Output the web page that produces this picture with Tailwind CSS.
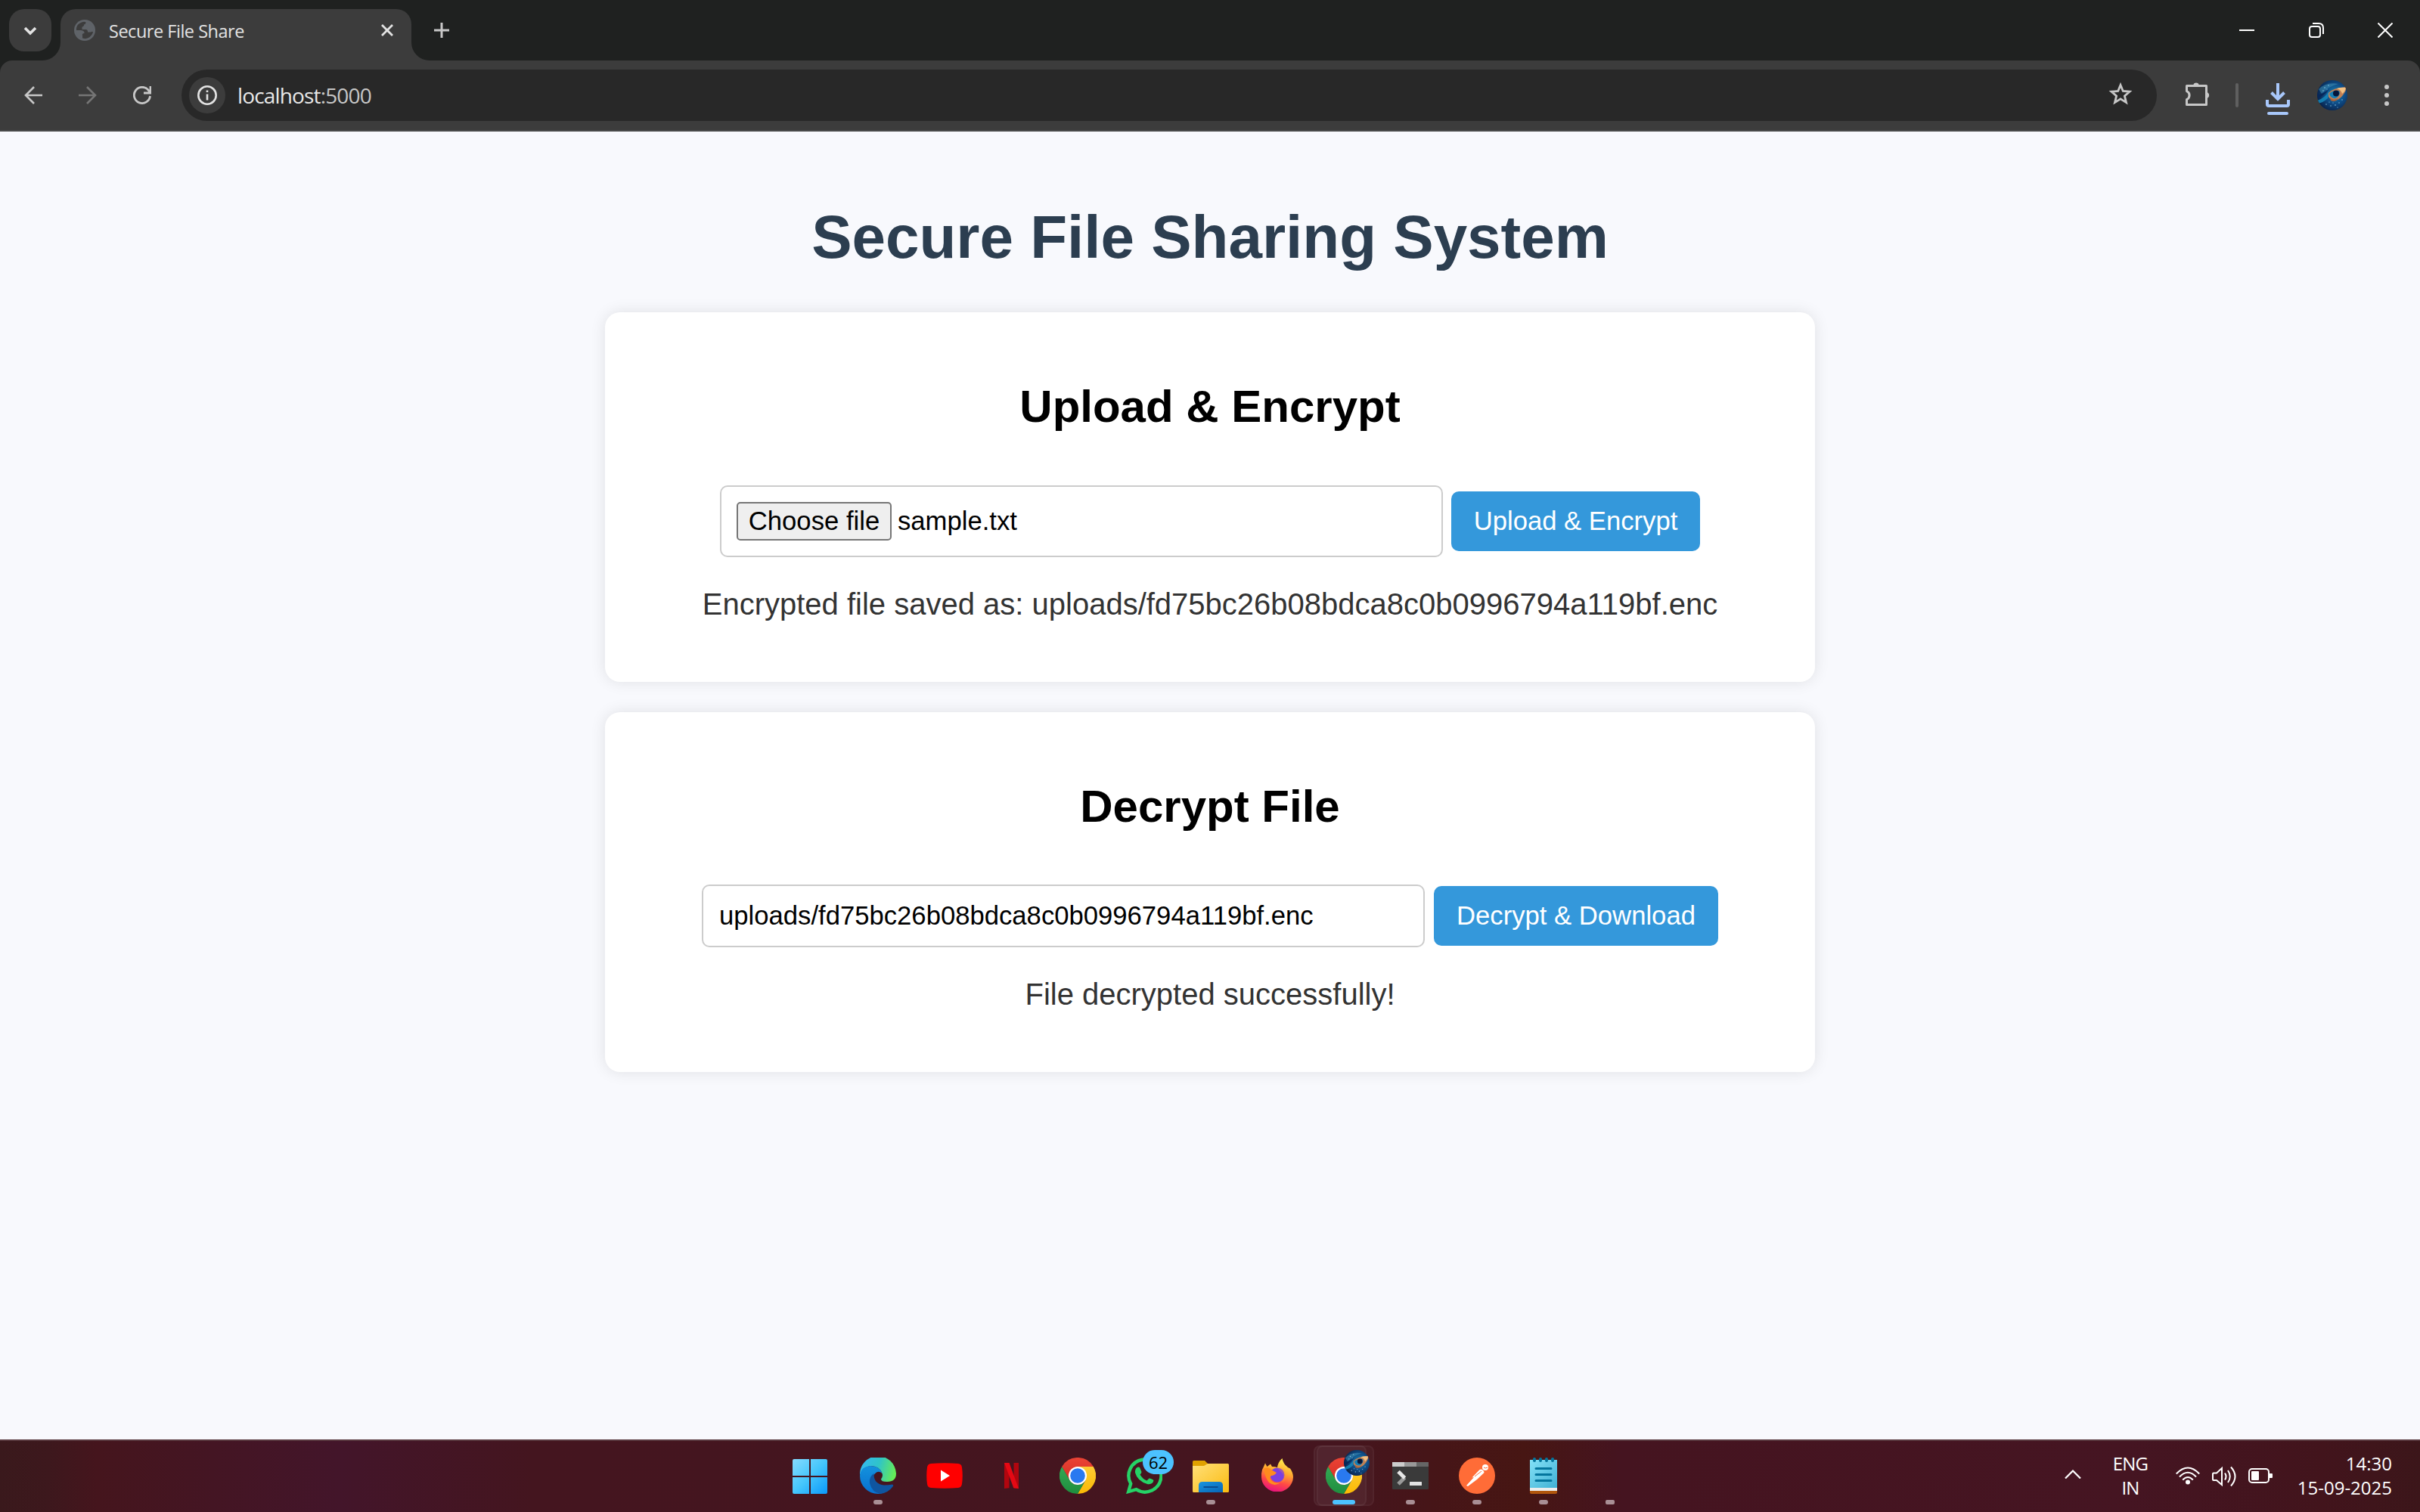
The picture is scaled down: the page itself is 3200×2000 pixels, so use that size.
<!DOCTYPE html>
<html lang="en">
<head>
<meta charset="utf-8">
<title>Secure File Share</title>
<script src="https://cdn.jsdelivr.net/npm/@tailwindcss/browser@4"></script>
</head>
<body class="w-[3200px] h-[2000px] overflow-hidden flex flex-col bg-[#f8f9fd] font-['Liberation_Sans',Arial,sans-serif]">

<!-- shared artwork -->
<svg class="absolute w-0 h-0" aria-hidden="true">
  <defs>
    <radialGradient id="eyeBg" cx=".6" cy=".45" r=".65"><stop offset="0" stop-color="#1787b8"/><stop offset=".5" stop-color="#0f4c86"/><stop offset="1" stop-color="#071c42"/></radialGradient>
    <clipPath id="eyeClip"><circle cx="20" cy="20" r="20"/></clipPath>
    <symbol id="eye" viewBox="0 0 40 40">
      <g clip-path="url(#eyeClip)">
        <rect width="40" height="40" fill="url(#eyeBg)"/>
        <path d="M2 12Q12 2 28 5Q15 8 6 18Z" fill="#3f8fb5" opacity=".55"/>
        <path d="M0 27Q10 24 16 14L14 24Q8 30 0 31Z" fill="#178fc0" opacity=".8"/>
        <path d="M0 19Q8 19 16 12Q10 20 1 24Z" fill="#06275a"/>
        <path d="M15 17Q21 10 38 9Q39 13 36 17Q32 24 25 27Q18 27 15 22Z" fill="#c08055"/>
        <path d="M26 11Q32 9 38 10Q37 15 33 18Q32 13 26 11Z" fill="#f0c083"/>
        <path d="M16 18Q21 13 29 14Q32 19 25 24Q18 25 16 18Z" fill="#167fb5"/>
        <circle cx="25" cy="17.500" r="4" fill="#04163a"/>
        <path d="M17 23Q21 28 28 24Q24 30 18 27Z" fill="#a5623c"/>
        <g fill="#8fc9e6"><circle cx="10" cy="10" r=".8"/><circle cx="15" cy="7" r=".7"/><circle cx="8" cy="14" r=".7"/><circle cx="13" cy="12" r=".6"/><circle cx="12" cy="32" r=".7"/><circle cx="18" cy="34" r=".7"/><circle cx="24" cy="33" r=".8"/><circle cx="29" cy="30" r=".7"/><circle cx="33" cy="26" r=".7"/><circle cx="21" cy="30" r=".6"/><circle cx="27" cy="36" r=".6"/><circle cx="16" cy="29" r=".6"/></g>
      </g>
    </symbol>
    <linearGradient id="cr" x1="0" y1="0" x2="0" y2="1"><stop offset="0" stop-color="#ea4335"/><stop offset="1" stop-color="#d93025"/></linearGradient>
    <linearGradient id="cg" x1="0" y1="0" x2="0" y2="1"><stop offset="0" stop-color="#34a853"/><stop offset="1" stop-color="#1e8e3e"/></linearGradient>
    <linearGradient id="cy" x1="0" y1="0" x2="0" y2="1"><stop offset="0" stop-color="#fccc34"/><stop offset="1" stop-color="#fbb904"/></linearGradient>
    <symbol id="chrome" viewBox="0 0 48 48">
      <path d="M3.200 12A24 24 0 0 1 44.800 12H24L13.600 30Z" fill="url(#cr)"/>
      <path d="M44.800 12A24 24 0 0 1 24 48L34.400 30L24 12Z" fill="url(#cy)"/>
      <path d="M24 48A24 24 0 0 1 3.200 12L13.600 30A12 12 0 0 0 34.400 30Z" fill="url(#cg)"/>
      <circle cx="24" cy="24" r="12" fill="#fff"/><circle cx="24" cy="24" r="9.800" fill="#2979f0"/>
    </symbol>
  </defs>
</svg>

<!-- tab strip -->
<header class="h-20 shrink-0 bg-[#1f2120] flex items-start">
  <button class="ml-3 mt-3 size-14 rounded-[20px] bg-[#3c3c3c] flex items-center justify-center">
    <svg class="w-5 h-4 mt-px" viewBox="0 0 20 16" fill="none" stroke="#e3e3e3" stroke-width="3.600"><path d="M3 4L10 11L17 4"/></svg>
  </button>
  <div class="ml-3 mt-3 w-[464px] h-[68px] rounded-t-[20px] bg-[#3c3c3c] flex items-center relative">
    <svg class="absolute -left-6 bottom-0 size-6" viewBox="0 0 24 24"><path d="M24 0V24H0A24 24 0 0 0 24 0Z" fill="#3c3c3c"/></svg>
    <svg class="absolute -right-6 bottom-0 size-6" viewBox="0 0 24 24"><path d="M0 0V24H24A24 24 0 0 1 0 0Z" fill="#3c3c3c"/></svg>
    <svg class="ml-[18px] mb-3 size-7" viewBox="0 0 28 28"><circle cx="14" cy="14" r="14" fill="#5f6368"/><path d="M3 14Q2.500 7 8 4.500Q12 2 15.500 3.200Q16 5.500 13 6.500Q13.500 9 10.500 9.500V13H16Q18.500 14 18 16.500H22Q24.500 15 25 17Q22 24 15 25.200L11 24.500V20.500Q8 19.500 8 16.500L3.200 14Z" fill="#3c3c3c"/><path d="M2.600 14H9Q14 14.500 13.500 18Q10.500 18 10.800 20.500V25Q3 22 2.600 14ZM15.500 3.200Q24.500 5 25.400 14Q21 15 19 14Q18 11 15 11H12.500V8.500Q16.500 7 15.500 3.200Z" fill="#5f6368"/></svg>
    <span class="ml-[18px] mb-2.5 text-[23.500px] leading-8 tracking-[-0.480px] text-[#e3e3e3] font-['Open_Sans',sans-serif] whitespace-nowrap">Secure File Share</span>
    <svg class="absolute left-[424px] top-5 size-4" viewBox="0 0 16 16" stroke="#e3e3e3" stroke-width="2.800"><path d="M1 1L15 15M15 1L1 15"/></svg>
  </div>
  <svg class="ml-[30px] mt-[30px] size-5" viewBox="0 0 20 20" stroke="#c7c7c7" stroke-width="3"><path d="M10 0V20M0 10H20"/></svg>
  <div class="ml-auto mt-[30px] mr-9 flex items-center gap-[71.500px]">
    <svg class="size-5" viewBox="0 0 20 20" stroke="#fff" stroke-width="2"><path d="M0 10H20"/></svg>
    <svg class="size-5" viewBox="0 0 20 20" fill="none" stroke="#fff" stroke-width="2"><rect x="1" y="5" width="14" height="14" rx="3"/><path d="M5 1H13Q19 1 19 7V15"/></svg>
    <svg class="size-5" viewBox="0 0 20 20" stroke="#fff" stroke-width="2"><path d="M.5 .5L19.500 19.500M19.500 .5L.5 19.500"/></svg>
  </div>
</header>

<!-- toolbar -->
<nav class="h-[94px] shrink-0 bg-[#1f2120]">
  <div class="h-full rounded-t-[16px] bg-[#3c3c3c] border-b-2 border-[#4a4b4b] flex items-center pl-8">
    <svg class="size-6 mr-12" viewBox="0 0 24 24" fill="none" stroke="#c7c7c7" stroke-width="2.600"><path d="M24 12H2M13 1L2 12L13 23"/></svg>
    <svg class="size-6 mr-12" viewBox="0 0 24 24" fill="none" stroke="#757575" stroke-width="2.600"><path d="M0 12H22M11 1L22 12L11 23"/></svg>
    <svg class="size-6 mr-10" viewBox="0 0 24 24" fill="none" stroke="#c7c7c7" stroke-width="2.800"><path d="M22.500 13A10.600 10.600 0 1 1 20 5L22 8M23 0V9H14"/></svg>
    <div class="w-[2612px] h-[68px] rounded-full bg-[#282828] flex items-center pl-2.5">
      <span class="size-12 rounded-full bg-[#3c3c3c] flex items-center justify-center">
        <svg class="size-[26px]" viewBox="0 0 26 26" fill="none" stroke="#e3e3e3" stroke-width="2.600"><circle cx="13" cy="13" r="11.700"/><path d="M13 11.500V19.500M13 6.500V9"/></svg>
      </span>
      <span class="ml-4 text-[28px] leading-9 tracking-[-0.850px] text-[#c7c7c7] font-['Open_Sans',sans-serif] whitespace-nowrap"><span class="text-[#e8e8e8]">localhost</span>:5000</span>
      <svg class="ml-auto mr-8 mb-1 size-8" viewBox="0 0 32 32" fill="none" stroke="#c7c7c7" stroke-width="2.800"><path d="M16 4.500L19.300 12.500L28 13.200L21.400 18.900L23.500 27.400L16 22.800L8.500 27.400L10.600 18.900L4 13.200L12.700 12.500Z"/></svg>
    </div>
    <svg class="ml-[38px] mb-1 size-8" viewBox="0 0 32 32"><path d="M3 5.500H27.500V30.500H1.500V23.500A6 6 0 0 0 1.500 12.500V5.500Z" fill="none" stroke="#c7c7c7" stroke-width="3" stroke-linejoin="round"/><path d="M10 5A4.200 5 0 0 1 18 5ZM28 14A4.500 4.200 0 0 1 28 22Z" fill="#c7c7c7"/></svg>
    <span class="ml-[34px] w-1 h-8 rounded-full bg-[#5f5f5f]"></span>
    <svg class="ml-9 mt-2.5 w-8 h-[42px]" viewBox="0 0 32 42" fill="none" stroke="#a8c7fa" stroke-width="4"><path d="M16 0V21M7.500 12.500L16 21L24.500 12.500M2 22V28Q2 30 4 30H28Q30 30 30 28V22"/><path d="M4 40H28" stroke-linecap="round"/></svg>
    <svg class="ml-9 size-10"><use href="#eye"/></svg>
    <svg class="ml-[49px] w-1.5 h-7" viewBox="0 0 6 28" fill="#c7c7c7"><circle cx="3" cy="3" r="3"/><circle cx="3" cy="14" r="3"/><circle cx="3" cy="25" r="3"/></svg>
  </div>
</nav>

<!-- page -->
<main class="flex-1 flex flex-col items-center">
  <h1 class="mt-[94px] h-[92px] leading-[92px] text-[80px] font-bold text-[#2c3e50] whitespace-nowrap">Secure File Sharing System</h1>
  <section class="mt-[53px] w-[1600px] h-[489px] rounded-[20px] bg-white shadow-[0_0_20px_rgba(0,0,0,0.1)] flex flex-col items-center">
    <h2 class="mt-[91px] h-[68px] leading-[68px] text-[60px] font-bold text-black whitespace-nowrap">Upload &amp; Encrypt</h2>
    <div class="mt-[70px] flex items-center gap-[11px]">
      <div class="w-[956px] h-[95px] rounded-[10px] border-2 border-[#ccc] bg-white flex items-center pl-5 gap-2 text-[34.670px] text-black">
        <button class="w-[205px] h-[51px] rounded-[5px] border-2 border-[#767676] bg-[#efefef] leading-[40px] pb-0.5 flex items-center justify-center whitespace-nowrap">Choose file</button>
        <span class="leading-[40px] pb-0.5">sample.txt</span>
      </div>
      <button class="w-[329px] h-[79px] rounded-[10px] bg-[#3498db] text-white text-[34.670px] leading-[40px] pb-0.5 whitespace-nowrap">Upload &amp; Encrypt</button>
    </div>
    <p class="mt-[39px] h-[46px] leading-[46px] text-[40px] text-[#333] whitespace-nowrap">Encrypted file saved as: uploads/fd75bc26b08bdca8c0b0996794a119bf.enc</p>
  </section>
  <section class="mt-10 w-[1600px] h-[476px] rounded-[20px] bg-white shadow-[0_0_20px_rgba(0,0,0,0.1)] flex flex-col items-center">
    <h2 class="mt-[91px] h-[68px] leading-[68px] text-[60px] font-bold text-black whitespace-nowrap">Decrypt File</h2>
    <div class="mt-[69px] flex items-center gap-3">
      <div class="w-[956px] h-[83px] rounded-[10px] border-2 border-[#ccc] bg-white flex items-center pl-[21px] pb-0.5 text-[34.670px] leading-[40px] text-black">uploads/fd75bc26b08bdca8c0b0996794a119bf.enc</div>
      <button class="w-[376px] h-[79px] rounded-[10px] bg-[#3498db] text-white text-[34.670px] leading-[40px] pb-0.5 whitespace-nowrap">Decrypt &amp; Download</button>
    </div>
    <p class="mt-[39px] h-[46px] leading-[46px] text-[40px] text-[#333] whitespace-nowrap">File decrypted successfully!</p>
  </section>
</main>

<!-- taskbar -->
<footer class="h-24 shrink-0 border-t-2 border-[#5a3a40] bg-[linear-gradient(90deg,#3a191c_0%,#3d181d_2%,#45151d_4%,#43152a_14%,#44151f_22%,#45151f_55%,#461518_59%,#471613_63%,#451420_67%,#451522_88%,#42141c_96%,#3c161a_100%)] flex items-start relative font-['Open_Sans',sans-serif]">
  <div class="ml-[1027px] flex">
    <div class="w-[88px] h-[94px] flex justify-center pt-6">
      <svg class="size-[46px]" viewBox="0 0 46 46"><defs><linearGradient id="w" gradientUnits="userSpaceOnUse" x1="0" y1="0" x2="46" y2="46"><stop offset="0" stop-color="#86dcff"/><stop offset=".5" stop-color="#45c6fb"/><stop offset="1" stop-color="#0a98fb"/></linearGradient></defs><path fill="url(#w)" d="M2 0H22V22H0V2Q0 0 2 0ZM24 0H44Q46 0 46 2V22H24ZM0 24H22V46H2Q0 46 0 44ZM24 24H46V44Q46 46 44 46H24Z"/></svg>
    </div>
    <div class="ml-[2px] w-[88px] h-[94px] flex flex-col items-center pt-[22px]">
      <svg class="size-12" viewBox="0 0 48 48"><defs><linearGradient id="e1" x1="0" y1=".3" x2="1" y2=".5"><stop offset="0" stop-color="#35b8f0"/><stop offset=".5" stop-color="#2fc4c9"/><stop offset="1" stop-color="#66eb56"/></linearGradient><linearGradient id="e2" x1="0" y1="0" x2="0" y2="1"><stop offset="0" stop-color="#1492dd"/><stop offset="1" stop-color="#0870cf"/></linearGradient></defs>
        <path d="M0 23A24 24 0 0 1 48 21Q48 32 36 32Q28 32 28 28.500Q31 25 29.500 21Q26 11 14 11Q4 12 0 23Z" fill="url(#e1)"/>
        <path d="M0 24Q1 12 14 11Q26 11 29.500 21Q26 17.500 22 19.500Q13 26 20 36Q28 45 36 43Q31 48 24 48A24 24 0 0 1 0 24Z" fill="url(#e2)"/>
        <path d="M18.500 21Q18 35 32 36.500Q38 36.500 43 35.500Q45 36 43.500 38.500Q37 47 27 48Q16 46 13 34Q12 25 18.500 21Z" fill="#0f55a0"/></svg>
      <span class="mt-2 w-3 h-1.5 rounded-full bg-[#a98f95]"></span>
    </div>
    <div class="w-[88px] h-[94px] flex justify-center pt-[29px]">
      <svg class="w-12 h-[34px]" viewBox="0 0 48 34"><path d="M6 1Q24-.5 42 1Q46.500 1.500 47 6Q48.500 17 47 28Q46.500 32.500 42 33Q24 34.500 6 33Q1.500 32.500 1 28Q-.5 17 1 6Q1.500 1.500 6 1Z" fill="#f00"/><path d="M19 9.500L31 17L19 24.500Z" fill="#fff"/></svg>
    </div>
    <div class="w-[88px] h-[94px] flex justify-center pt-[29px]">
      <svg class="w-[19px] h-[34px]" viewBox="0 0 19 34"><path d="M0 0H6.500V33.300L0 34ZM12.500 0H19V34L12.500 33.300Z" fill="#b1060f"/><path d="M0 0H6.500L19 34L12.300 33.200Z" fill="#e50914"/></svg>
    </div>
    <div class="w-[88px] h-[94px] flex justify-center pt-[22px]"><svg class="size-12"><use href="#chrome"/></svg></div>
    <div class="w-[88px] h-[94px] flex justify-center pt-[22px] relative">
      <svg class="size-12" viewBox="0 0 48 48"><path d="M3.200 45L6.200 34.500A21.500 21.500 0 1 1 13.500 42.200Z" fill="none" stroke="#25d366" stroke-width="4.400"/><path d="M14 13.500Q16 12 18 13L20.500 19Q20.500 20.500 18.500 22.500Q22 28.500 27.500 30.500L30.500 27.500Q31.500 27 36 29.500Q37 31 35 33.500Q32 36 28 35Q15 31 12 20Q11.500 16 14 13.500Z" fill="#25d366"/></svg>
      <span class="absolute left-[42px] top-3 w-[41px] h-8 rounded-full bg-[#4cc2ff] text-black text-[22px] leading-8 text-center">62</span>
    </div>
    <div class="w-[88px] h-[94px] flex flex-col items-center pt-[25px]">
      <svg class="w-12 h-[43px]" viewBox="0 0 48 43"><defs><linearGradient id="f" x1="0" y1="0" x2="1" y2="1"><stop offset="0" stop-color="#ffe07a"/><stop offset="1" stop-color="#fbbb10"/></linearGradient><linearGradient id="fb" x1="0" y1="0" x2="1" y2="1"><stop offset="0" stop-color="#1995df"/><stop offset="1" stop-color="#0764b5"/></linearGradient></defs><path d="M1.500 1H16L20 5V10H0V2.500Q0 1 1.500 1Z" fill="#e0a100"/><path d="M0 8H15L20 5H46.500Q48 5 48 6.500V41.500Q48 43 46.500 43H1.500Q0 43 0 41.500Z" fill="url(#f)"/><path d="M8 43V34Q8 29 13 29H35Q40 29 40 34V43Z" fill="url(#fb)"/><path d="M14.500 36H33.500" stroke="#0a4c8f" stroke-width="2"/></svg>
      <span class="mt-2.5 w-3 h-1.5 rounded-full bg-[#a98f95]"></span>
    </div>
    <div class="w-[88px] h-[94px] flex justify-center pt-[23px]">
      <svg class="w-[42px] h-[44px]" viewBox="0 0 42 44"><defs><linearGradient id="ff" x1=".7" y1="0" x2=".4" y2="1"><stop offset="0" stop-color="#fff44f"/><stop offset=".4" stop-color="#ffa930"/><stop offset=".7" stop-color="#ff4a45"/><stop offset="1" stop-color="#e8117f"/></linearGradient></defs><path d="M3 11L5 6.500L7.500 11L12 7.500L14 11Q18 11 21 12Q22 5 27.500 0Q28.500 7 35 12L38 13.500Q42 19 42 25A21 20 0 0 1 0 24Q-.5 16 3 11Z" fill="url(#ff)"/><circle cx="21" cy="22" r="9.500" fill="#7b3fe0"/><path d="M21 13Q29 10 32 18Q36 30 24 33Q32 27 28 20Z" fill="#ff9a2e" opacity=".25"/><path d="M3 14Q8 10 13 15L20 19Q17 23 13 23Q10 25 13 29Q18 34 25 32Q18 38 10 32Q5 26 3 14Z" fill="#ff8b1e"/></svg>
    </div>
    <div class="w-[88px] h-[94px] flex flex-col items-center pt-[22px] relative">
      <span class="absolute left-[8px] top-[6px] w-[76px] h-20 rounded-[8px] border-2 border-white/4 bg-white/3"></span>
      <span class="absolute left-[4px] top-[6px] w-[70px] h-20 rounded-[8px] border-2 border-white/4 bg-white/4"></span>
      <svg class="size-12 relative"><use href="#chrome"/></svg>
      <svg class="absolute left-[44px] top-3 size-[34px]"><use href="#eye"/></svg>
      <span class="mt-2 w-[30px] h-1.5 rounded-full bg-[#4cc2ff] relative"></span>
    </div>
    <div class="w-[88px] h-[94px] flex flex-col items-center pt-7">
      <svg class="w-12 h-9" viewBox="0 0 48 36"><rect width="48" height="36" rx="1" fill="#3a3a3a"/><path d="M0 0H16V6H0Z" fill="#ccc"/><path d="M16 0H32V6H16Z" fill="#999"/><path d="M32 0H48V6H32Z" fill="#666"/><path d="M8 29L16.500 20.500" stroke="#999" stroke-width="5"/><path d="M8 12.500L16.500 21" stroke="#e6e6e6" stroke-width="5"/><rect x="23" y="26" width="16" height="5" rx=".5" fill="#e3e3e3"/></svg>
      <span class="mt-3.5 w-3 h-1.5 rounded-full bg-[#a98f95]"></span>
    </div>
    <div class="w-[88px] h-[94px] flex flex-col items-center pt-[22px]">
      <svg class="size-12" viewBox="0 0 48 48"><circle cx="24" cy="24" r="24" fill="#ff6c37"/><circle cx="35" cy="13" r="4" fill="#fff"/><path d="M31 16Q34 18 33.500 20L24 29L12 38L10 37L20 26L17.500 26.500L27 16.500Q29 15 31 16Z" fill="#fff"/><path d="M21 25L30 18M33 13Q35 15 38 13" stroke="#ff6c37" stroke-width="1" fill="none"/></svg>
      <span class="mt-2 w-3 h-1.5 rounded-full bg-[#a98f95]"></span>
    </div>
    <div class="w-[88px] h-[94px] flex flex-col items-center pt-[22px]">
      <svg class="w-9 h-12" viewBox="0 0 36 48"><defs><linearGradient id="n" x1="0" y1="0" x2="1" y2="1"><stop offset="0" stop-color="#84e2f8"/><stop offset="1" stop-color="#40b0d3"/></linearGradient></defs><path d="M0 40H36V46Q36 48 34 48H2Q0 48 0 46Z" fill="#b1560c"/><path d="M0 36H36V44H0Z" fill="#ececec"/><path d="M0 3H36V40H0Z" fill="url(#n)"/><path d="M8 14.500H28M8 22.500H28M8 30.500H28" stroke="#04759d" stroke-width="3" stroke-linecap="round"/><path d="M6 2V4M14 2V4M22 2V4M30 2V4" stroke="#04759d" stroke-width="4" stroke-linecap="round"/></svg>
      <span class="mt-2 w-3 h-1.5 rounded-full bg-[#a98f95]"></span>
    </div>
    <div class="w-[88px] h-[94px] flex flex-col items-center pt-[78px]"><span class="w-3 h-1.5 rounded-xs bg-[#a98f95]"></span></div>
  </div>
  <div class="ml-auto h-[94px] pr-[37px] pb-0.5 flex items-center text-white text-[24px] leading-8">
    <svg class="w-[22px] h-3 mr-[42px] mb-1" viewBox="0 0 22 12" fill="none" stroke="#fff" stroke-width="2.200"><path d="M1 11.500L11 1.500L21 11.500"/></svg>
    <div class="w-[46px] mr-[37px] tracking-[-0.800px] flex flex-col items-center"><span>ENG</span><span>IN</span></div>
    <svg class="w-8 h-6 mr-4" viewBox="0 0 32 24" fill="none" stroke="#fff" stroke-width="2.200"><path d="M.8 9.500Q16-6.500 31.200 9.500M5 13.500Q16 2 27 13.500M9.200 17.500Q16 10.500 22.800 17.500"/><circle cx="16" cy="20.500" r="3" fill="#fff" stroke="none"/></svg>
    <svg class="w-8 h-7 mr-4 mt-0.5" viewBox="0 0 32 28" fill="none" stroke="#fff" stroke-width="2"><path d="M1 10.500Q1 9.500 2 9.500H6L13 3V25L6 19H2Q1 19 1 18Z"/><path d="M17 9.500Q20 14 17 18.500M21 6Q26.500 14 21 22M25 1.500Q36 14 25 26.500"/></svg>
    <svg class="w-8 h-5 mr-[33px]" viewBox="0 0 32 20"><rect x="1" y="1" width="26" height="18" rx="4" fill="none" stroke="#fff" stroke-width="2"/><rect x="4" y="4" width="10" height="12" rx="1" fill="#fff"/><path d="M28 7H31Q32 7 32 8V12Q32 13 31 13H28Z" fill="#fff"/></svg>
    <div class="w-[125px] flex flex-col items-end whitespace-nowrap"><span>14:30</span><span>15-09-2025</span></div>
  </div>
</footer>
</body>
</html>
